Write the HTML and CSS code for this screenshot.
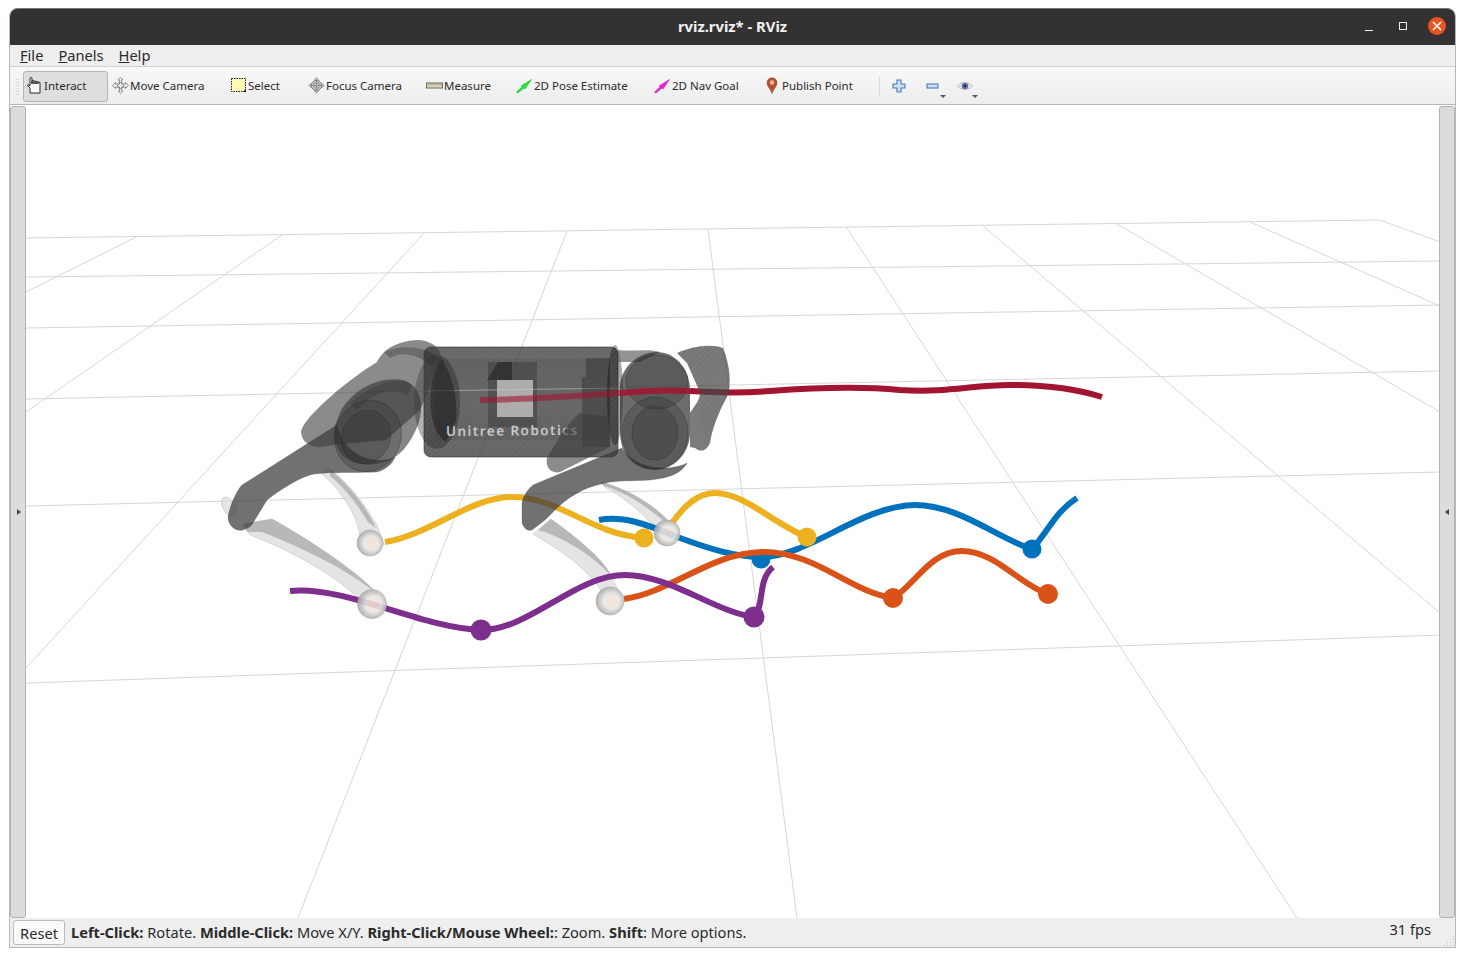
FILE: index.html
```html
<!DOCTYPE html>
<html lang="en">
<head>
<meta charset="utf-8">
<title>rviz.rviz* - RViz</title>
<link rel="stylesheet" href="styles.css">
</head>
<body>
<div class="window">
  <header class="titlebar">
    <span class="title">rviz.rviz* - RViz</span>
    <div class="wm">
      <span class="wm-min"></span>
      <span class="wm-max"></span>
      <span class="wm-close">
        <svg width="10" height="10" viewBox="0 0 10 10"><path d="M1 1L9 9M9 1L1 9" stroke="#fff" stroke-width="1.6" fill="none"/></svg>
      </span>
    </div>
  </header>
  <nav class="menubar">
    <span class="menu"><u>F</u>ile</span>
    <span class="menu"><u>P</u>anels</span>
    <span class="menu"><u>H</u>elp</span>
  </nav>
  <div class="toolbar">
    <span class="grip"></span>
    <button class="tool active w-interact">
      <svg class="ico" width="17" height="17" viewBox="0 0 17 17"><path d="M4 16V11L1.500 8.500L2 7.500L4 9V1.500a1 1 0 0 1 2 0V7V4.500a1 1 0 0 1 2 0V7V5a1 1 0 0 1 2 0V7V5.500a1 1 0 0 1 2 0V7V6a1 1 0 0 1 2 0V12L14 16z" fill="#fff" stroke="#111" stroke-width=".9"/></svg>
      <span>Interact</span>
    </button>
    <button class="tool w-move">
      <svg class="ico" width="17" height="17" viewBox="0 0 17 17"><path d="M8.500 .5L11 3H9.500V7H13.500V5.500L16.500 8.500L13.500 11.500V10H9.500V14H11L8.500 16.500L6 14H7.500V10H3.500V11.500L.5 8.500L3.500 5.500V7H7.500V3H6z" fill="#eee" stroke="#777" stroke-width=".8"/><circle cx="8.500" cy="8.500" r="3" fill="none" stroke="#888"/></svg>
      <span>Move Camera</span>
    </button>
    <button class="tool w-select">
      <svg class="ico" width="17" height="17" viewBox="0 0 17 17"><rect x="1.500" y="1.500" width="14" height="13" fill="#fdf8b4" stroke="#222" stroke-dasharray="1.500 1"/><path d="M13 15h3v-3z" fill="#111"/></svg>
      <span>Select</span>
    </button>
    <button class="tool w-focus">
      <svg class="ico" width="17" height="17" viewBox="0 0 17 17"><path d="M8.500 .5L11 3.500H6zM8.500 16.500L6 13.500H11zM.5 8.500L3.500 6V11zM16.500 8.500L13.500 11V6z" fill="#bbb" stroke="#888" stroke-width=".6"/><circle cx="8.500" cy="8.500" r="5" fill="#ddd" stroke="#777"/><path d="M8.500 3V14M3 8.500H14M6 6h5v5H6z" fill="none" stroke="#777" stroke-width=".8"/></svg>
      <span>Focus Camera</span>
    </button>
    <button class="tool w-measure">
      <svg class="ico" width="17" height="17" viewBox="0 0 17 17"><rect x=".5" y="6" width="16" height="5" fill="#e0dcb8" stroke="#666"/><path d="M3 6.500v2M5 6.500v2M7 6.500v2M9 6.500v2M11 6.500v2M13 6.500v2M15 6.500v2" stroke="#777" stroke-width=".7"/></svg>
      <span>Measure</span>
    </button>
    <button class="tool w-pose">
      <svg class="ico" width="17" height="17" viewBox="0 0 17 17"><path d="M.5 15L6 10L5 9L15.500 2.500L9 12L8 11L2 16z" fill="#22e53a" stroke="#14a82a" stroke-width=".5"/></svg>
      <span>2D Pose Estimate</span>
    </button>
    <button class="tool w-nav">
      <svg class="ico" width="17" height="17" viewBox="0 0 17 17"><path d="M.5 15L6 10L5 9L15.500 2.500L9 12L8 11L2 16z" fill="#f41fd8" stroke="#b512a0" stroke-width=".5"/></svg>
      <span>2D Nav Goal</span>
    </button>
    <button class="tool w-point">
      <svg class="ico pin" width="12" height="17" viewBox="0 0 12 17"><path d="M6 16.500C4.500 12 1 9.500 1 5.800a5 5 0 0 1 10 0C11 9.500 7.500 12 6 16.500z" fill="#b5502f" stroke="#8a3a20" stroke-width=".5"/><circle cx="6" cy="5.500" r="2.200" fill="#f3b9a0"/></svg>
      <span>Publish Point</span>
    </button>
    <span class="sep"></span>
    <div class="mini m-plus">
      <svg width="14" height="14" viewBox="0 0 14 14"><path d="M5 1H9V5H13V9H9V13H5V9H1V5H5z" fill="#cfe0f5" stroke="#4a78b8" stroke-width="1.100"/></svg>
    </div>
    <div class="mini m-minus">
      <svg width="14" height="14" viewBox="0 0 14 14"><rect x="1" y="5" width="11" height="4" fill="#cfe0f5" stroke="#4a78b8" stroke-width="1.100"/></svg>
      <i class="caret"></i>
    </div>
    <div class="mini m-eye">
      <svg width="16" height="14" viewBox="0 0 16 14"><path d="M.5 7C3.500 2.500 12.500 2.500 15.500 7C12.500 11.500 3.500 11.500 .5 7z" fill="#e8e8ee" stroke="#aaa" stroke-width=".7"/><circle cx="8" cy="7" r="3.300" fill="#6272ac"/><circle cx="8" cy="7" r="1.300" fill="#1c2340"/></svg>
      <i class="caret"></i>
    </div>
  </div>
  <main class="stage">
    <div class="handle"><i class="tri-r"></i></div>
    <svg class="scene" width="1413" height="813" viewBox="26 105 1413 813">
      <defs>
        <linearGradient id="bodyGrad" x1="0" y1="0" x2="0" y2="1">
          <stop offset="0" stop-color="#3c3c3c"/><stop offset=".55" stop-color="#474747"/><stop offset="1" stop-color="#383838"/>
        </linearGradient>
        <pattern id="hatch" width="4" height="4" patternUnits="userSpaceOnUse" patternTransform="rotate(45)">
          <rect width="1.200" height="4" fill="#000" fill-opacity=".5"/>
        </pattern>
        <radialGradient id="foot" cx=".55" cy=".5" r=".55">
          <stop offset="0" stop-color="#f6ddcc"/><stop offset=".5" stop-color="#e9e6e3"/><stop offset="1" stop-color="#a4a4a4"/>
        </radialGradient>
      </defs>
      <g class="grid">
        <path d="M26 238L1380 220M26 277L1440 261M26 328L1440 305M26 399L1440 371M26 506L1440 472M26 683L1440 635"/>
        <path d="M136 237L26 292M282 235L26 412M425 232L26 668M567 231L298 918M708 229L797 918M847 228L1297 918M983 226L1440 613M1117 224L1440 412M1250 222L1440 306M1380 220L1440 242"/>
      </g>

      <g class="legs">
        <path class="calf" d="M328 468C350 482 368 510 377 525L384 545L360 535C355 510 340 490 322 474z"/>
        <path class="calf-edge" d="M330 470C350 485 368 510 376 528L368 522C358 505 345 488 330 476z"/>
        <path class="calf" d="M243 524L272 519C310 540 355 570 378 594L360 600C335 575 290 550 250 535z"/>
        <path class="calf-edge" d="M243 524L272 519C310 540 355 570 378 594L372 590C340 565 295 545 262 532L247 532z"/>
        <path class="calf" d="M601 482C630 490 655 505 672 525L655 528C640 510 620 495 606 488z"/>
        <path class="calf-edge" d="M601 482C630 490 655 505 672 525L665 522C645 505 625 492 604 486z"/>
        <path class="calf" d="M538 530L551 519C580 540 610 565 620 595L603 594C590 570 560 550 533 534z"/>
        <path class="calf-edge" d="M538 530L551 519C580 540 605 560 613 578C590 552 565 540 545 532z"/>
        <ellipse class="calf" cx="229" cy="507" rx="6" ry="11" transform="rotate(-30 229 507)"/>
      </g>

      <g class="traj">
        <path class="c-blue" d="M599 520C625 515 650 526 680 538C710 549 735 557 762 557C810 556 860 506 915 505C960 505 1000 540 1032 549C1048 532 1055 512 1077 498"/>
        <circle class="f-blue" cx="761" cy="559" r="9.500"/>
        <circle class="f-blue" cx="1032" cy="549" r="9.500"/>
        <path class="c-yellow" d="M385 542C430 535 470 497 512 497C560 497 590 534 644 538"/>
        <path class="c-yellow" d="M672 523C685 505 698 493 715 493C745 493 775 525 807 537"/>
        <circle class="f-yellow" cx="644" cy="538" r="9.500"/>
        <circle class="f-yellow" cx="807" cy="537" r="9.500"/>
        <path class="c-orange" d="M624 599C670 593 710 553 762 552C815 551 850 592 893 598C915 585 930 551 962 551C995 551 1020 585 1048 594"/>
        <circle class="f-orange" cx="893" cy="598" r="10"/>
        <circle class="f-orange" cx="1048" cy="594" r="10"/>
        <path class="c-purple" d="M290 591C345 585 420 628 481 630C530 630 575 575 625 575C670 575 715 612 754 617C765 605 757 580 773 567"/>
        <circle class="f-purple" cx="481" cy="630" r="10.500"/>
        <circle class="f-purple" cx="754" cy="617" r="10.500"/>
        <path class="c-red" d="M690 391C720 393 745 393 770 391C810 388 860 386 900 390C950 393 970 385 1010 385C1050 385 1080 390 1102 397"/>
      </g>

      <g class="robot">
        <path class="hip" d="M677 353C690 347 710 343 723 348C730 365 732 385 727 397C718 413 712 430 710 443C706 452 700 452 695 448L690 447L690 413C695 405 700 400 700 393C695 380 690 370 687 363z"/>
        <path class="hatch" d="M677 353C690 347 710 343 723 348C730 365 732 385 727 397C718 413 712 430 710 443L702 430L700 393C695 380 690 370 687 363z"/>

        <rect class="torso" x="424" y="347" width="194" height="110" rx="7"/>
        <rect class="hatch" x="424" y="347" width="194" height="110" rx="7"/>
        <path class="torso-band" d="M435 359H610V440H435z"/>
        <path class="torso-block" d="M488 362H537V427H488z"/>
        <path class="torso-tri" d="M487 380L498 362H512V380z"/>
        <rect class="torso-light" x="497" y="380" width="36" height="37"/>
        <path class="torso-line" d="M424 391L618 388"/>
        <ellipse class="dark" cx="437" cy="402" rx="23" ry="47"/>
        <ellipse class="hatch" cx="437" cy="402" rx="23" ry="47"/>
        <path class="darker" d="M440 356C452 375 458 395 456 420L446 442C428 430 425 390 440 356z"/>
        <path class="dark" d="M586 358H610V447H582V377H586z"/>
        <ellipse class="darker" cx="615" cy="395" rx="8" ry="50"/>
        <ellipse class="hatch" cx="615" cy="395" rx="8" ry="50"/>
        <text class="logo" x="446" y="436" transform="rotate(-.5 446 436)">Unitree Robotics</text>

        <path class="link-up" d="M377 362C385 345 405 340 420 340C435 342 445 352 440 365L420 410L386 440L332 445C315 450 302 445 301 432C302 420 340 385 377 362z"/>
        <path class="band" d="M350 403C370 385 400 375 412 385L408 395C390 385 370 395 357 410z"/>
        <path class="band" d="M384 352C400 345 425 345 438 358L432 366C415 352 400 352 390 358z"/>
        <path class="link" d="M337 425L310 442L242 485C237 490 230 505 228 517C228 525 235 532 243 530C248 528 252 526 253 523L267 500C280 490 295 480 310 475C320 472 340 473 377 472C388 469 393 462 395 457C380 465 345 460 337 425z"/>
        <path class="motor-body" d="M338 418C345 395 375 375 403 380C420 385 425 405 418 425C410 445 400 455 390 460C365 470 330 465 335 425z"/>
        <ellipse class="motor" cx="368" cy="436" rx="33" ry="36" transform="rotate(24 368 436)"/>
        <ellipse class="motor" cx="366" cy="437" rx="24" ry="27" transform="rotate(24 366 437)"/>

        <path class="link-up" d="M547 458C545 468 552 474 560 472L610 447V417L580 413C565 425 555 445 547 458z"/>
        <path class="link" d="M622 448L533 485C527 490 523 497 522 503V523C525 530 528 531 532 530L545 520L557 508C565 500 575 494 583 490C595 485 605 483 610 482C625 480 640 481 650 480C660 479 668 477 673 475C680 472 685 467 687 463C670 472 635 470 622 448z"/>
        <path class="band-light" d="M618 350C632 352 650 348 660 352L640 362H618z"/>
        <path class="shoulder" d="M620 385C622 365 640 352 658 352C678 353 690 372 690 390V432C690 455 672 470 655 470C635 470 620 455 620 432z"/>
        <ellipse class="motor" cx="657" cy="382" rx="31" ry="27"/>
        <ellipse class="motor" cx="655" cy="433" rx="33" ry="36"/>
        <ellipse class="motor" cx="655" cy="433" rx="23" ry="27"/>
      </g>

      <path class="c-red-in" d="M480 400C530 399 580 396 620 393"/>
      <path class="c-red-mid" d="M620 393C650 390 670 390 690 391"/>

      <circle class="sphere" cx="370" cy="543" r="13"/>
      <circle class="sphere" cx="372" cy="604" r="14.500"/>
      <circle class="sphere" cx="667" cy="533" r="13"/>
      <circle class="sphere" cx="610" cy="601" r="14"/>
    </svg>
    <div class="handle"><i class="tri-l"></i></div>
  </main>
  <footer class="status">
    <button class="reset">Reset</button>
    <span class="hint"><b>Left-Click:</b> Rotate. <b>Middle-Click:</b> Move X/Y. <b>Right-Click/Mouse Wheel:</b>: Zoom. <b>Shift</b>: More options.</span>
    <span class="fps">31 fps</span>
    <span class="resize"></span>
  </footer>
</div>
</body>
</html>
```

FILE: styles.css
```css
* { box-sizing: border-box; }
html, body { margin: 0; height: 100%; background: #fff; }
body { padding: 8px 0 0 9px; font-family: "Noto Sans", "Open Sans", sans-serif; color: #2a2a2a; }
button { font: inherit; color: inherit; }

.window {
  width: 1447px;
  height: 940px;
  display: flex;
  flex-direction: column;
  background: #efefef;
  border-right: 1px solid #b8b8b8;
  border-left: 1px solid #b8b8b8;
  border-bottom: 1px solid #b8b8b8;
  border-radius: 9px 9px 0 0;
}

.titlebar {
  height: 37px;
  flex: none;
  background: #333131;
  border-radius: 8px 8px 0 0;
  border-top: 1px solid #777;
  padding-bottom: 2px;
  display: flex;
  align-items: center;
  justify-content: center;
  position: relative;
  color: #f2f2f2;
}
.title { font-size: 14.800px; font-weight: 700; }
.wm { position: absolute; right: 9px; top: 8px; display: flex; align-items: center; }
.wm-min { width: 8px; height: 1px; background: #eee; margin-right: 26px; margin-top: 9px; }
.wm-max { width: 8px; height: 8px; border: 1px solid #eee; margin-right: 21px; }
.wm-close { width: 18px; height: 18px; border-radius: 50%; background: #e95420; display: flex; align-items: center; justify-content: center; }

.menubar {
  height: 22px;
  flex: none;
  display: flex;
  gap: 15px;
  padding: 0 0 2px 10px;
  align-items: center;
  font-size: 14.630px;
  border-bottom: 1px solid #d2d2d2;
  background: #eeeeee;
}

.toolbar {
  height: 38px;
  flex: none;
  display: flex;
  align-items: flex-start;
  padding: 4px 0 0 5px;
  background: linear-gradient(#f8f8f8, #ededed);
  border-bottom: 1px solid #b5b5b5;
}
.grip {
  width: 5px;
  height: 18px;
  margin: 7px 3px 0 0;
  background-image: radial-gradient(circle, #bbb 0.7px, transparent 0.8px);
  background-size: 2.500px 3px;
}
.tool {
  height: 31px;
  display: flex;
  flex: none;
  align-items: center;
  gap: 1px;
  padding: 0 0 2px 2px;
  border: 1px solid transparent;
  background: none;
  border-radius: 3px;
  font-size: 11.500px;
  white-space: nowrap;
}
.tool.active { background: #dedede; border-color: #b4b4b4; }
.ico { flex: none; }
.pin { margin-right: 3px; }
.w-interact { width: 85px; }
.w-move { width: 118px; margin-left: 1px; }
.w-select { width: 78px; }
.w-focus { width: 118px; }
.w-measure { width: 90px; }
.w-pose { width: 138px; }
.w-nav { width: 112px; }
.w-point { width: 116px; }
.sep { width: 1px; height: 19px; background: #d6d6d6; margin: 6px 12px 0 0; }
.mini { display: flex; position: relative; align-items: center; flex: none; height: 14px; margin-top: 8px; }
.m-plus { width: 34px; }
.m-minus { width: 31px; }
.m-eye { width: 24px; }
.caret { position: absolute; top: 16px; border: 3px solid transparent; border-top: 3px solid #555; border-bottom: 0; }
.m-minus .caret { left: 14px; }
.m-eye .caret { left: 15px; }

.stage { flex: 1; display: flex; min-height: 0; background: #fff; }
.handle {
  width: 16px;
  flex: none;
  background: #dcdcdc;
  border: 1px solid #b2b2b2;
  border-radius: 3px;
  display: flex;
  align-items: center;
  justify-content: center;
  margin-top: 1px;
}
.tri-r { border: 3px solid transparent; border-left: 4px solid #444; border-right: 0; margin-left: 1px; }
.tri-l { border: 3px solid transparent; border-right: 4px solid #444; border-left: 0; }
.scene { flex: none; display: block; background: #fff; }

.grid path { fill: none; stroke: #d6d6d6; stroke-width: 1; }
.traj path, .c-red-in, .c-red-mid { fill: none; stroke-width: 6; }
.c-blue { stroke: #0072bd; }
.c-yellow { stroke: #edb120; }
.c-orange { stroke: #d95319; }
.c-purple { stroke: #7e2f8e; }
.c-red { stroke: #a2142f; }
.c-red-in { stroke: #a2142f; stroke-opacity: .6; }
.c-red-mid { stroke: #a2142f; stroke-opacity: .85; }
.f-blue { fill: #0072bd; }
.f-yellow { fill: #edb120; }
.f-orange { fill: #d95319; }
.f-purple { fill: #7e2f8e; }

.calf { fill: #d8d8d8; fill-opacity: .7; stroke: #b4b4b4; stroke-opacity: .6; stroke-width: .7; }
.calf-edge { fill: #8c8c8c; fill-opacity: .5; }
.torso { fill: url(#bodyGrad); fill-opacity: .76; stroke: #333; stroke-opacity: .6; }
.hatch { fill: url(#hatch); fill-opacity: .12; }
.torso-band { fill: #222; fill-opacity: .1; }
.torso-block { fill: #222; fill-opacity: .3; }
.torso-tri { fill: #111; fill-opacity: .45; }
.torso-light { fill: #d8d8d8; fill-opacity: .68; }
.torso-line { stroke: #ccc; stroke-opacity: .6; fill: none; }
.logo { font-family: "Noto Sans", sans-serif; font-size: 13.500px; font-weight: 600; fill: #c8c8c8; letter-spacing: 1.450px; }
.dark { fill: #1a1a1a; fill-opacity: .32; }
.darker { fill: #0a0a0a; fill-opacity: .35; }
.link { fill: #3a3a3a; fill-opacity: .72; stroke: #333; stroke-opacity: .35; stroke-width: .7; }
.link-up { fill: #3e3e3e; fill-opacity: .6; }
.band { fill: #222; fill-opacity: .3; }
.band-light { fill: #666; fill-opacity: .7; }
.hip { fill: #484848; fill-opacity: .72; }
.shoulder { fill: #2e2e2e; fill-opacity: .7; }
.motor-body { fill: #333; fill-opacity: .6; }
.motor { fill: #303030; fill-opacity: .28; stroke: #222; stroke-opacity: .4; stroke-width: .8; }
.sphere { fill: url(#foot); fill-opacity: .88; stroke: #aaa; stroke-width: .6; }

.status {
  height: 29px;
  flex: none;
  display: flex;
  align-items: center;
  font-size: 14.630px;
  padding: 0 0 1px 3px;
  position: relative;
  background: #eeeeee;
}
.reset {
  height: 25px;
  width: 52px;
  padding: 0;
  background: #fafafa;
  border: 1px solid #bbb;
  border-radius: 3px;
  margin: 1px 6px 0 0;
}
.hint { white-space: nowrap; }
.hint b { font-weight: 700; }
.fps { position: absolute; right: 24px; top: 1px; }
.resize {
  position: absolute;
  right: 1px;
  bottom: 1px;
  width: 11px;
  height: 11px;
  background-image: radial-gradient(circle, #bbb 0.7px, transparent 0.8px);
  background-size: 3px 3px;
  clip-path: polygon(100% 0, 100% 100%, 0 100%);
}
```
